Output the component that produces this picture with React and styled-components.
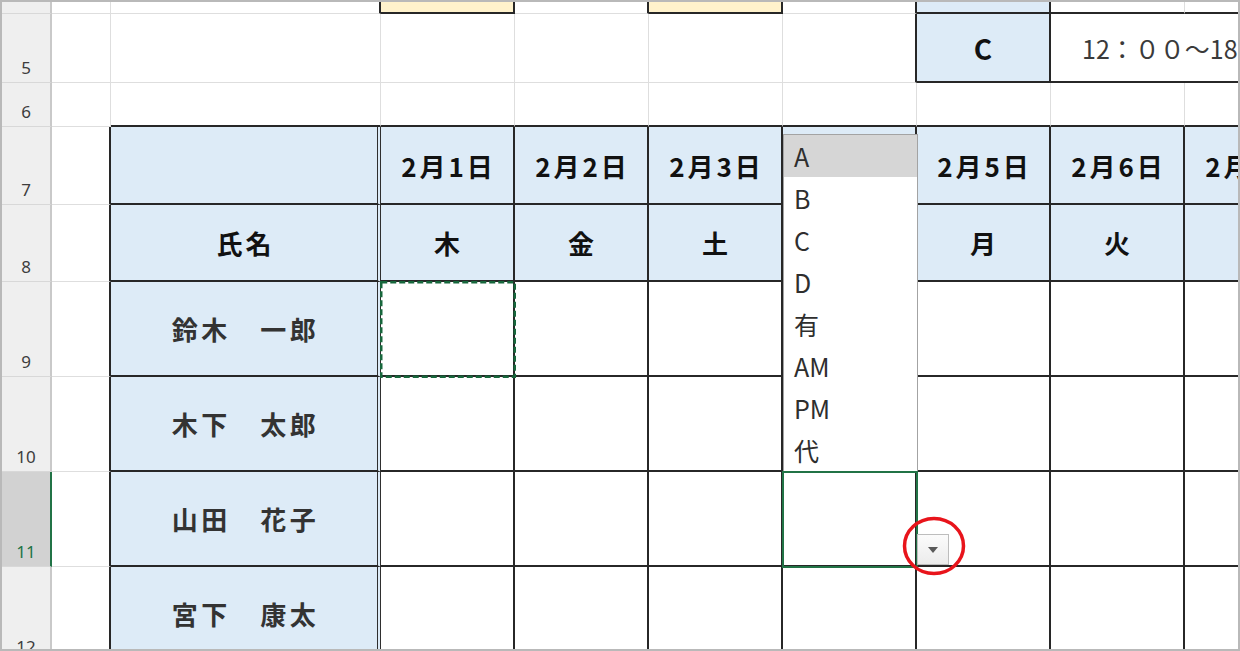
import React from 'react'
import styled, { createGlobalStyle } from 'styled-components'

const GlobalStyle = createGlobalStyle`
  html, body {
    margin: 0;
    padding: 0;
    background: #fff;
  }
  body {
    font-family: "Noto Sans CJK JP", "Noto Sans", sans-serif;
  }
`

const DARK = '2px solid #272727'
const LIGHT = '1px solid #dedede'
const DOUBLE = '4px double #2f2f2f'

const tones = {
    white: '#ffffff',
    blue: '#ddebf7',
    yellow: '#fff2cc',
}

const dates = ['2月1日', '2月2日', '2月3日', '2月4日', '2月5日', '2月6日', '2月7日']
const days = ['木', '金', '土', '日', '月', '火', '水']
const people = [
    { row: 9, name: '鈴木　一郎' },
    { row: 10, name: '木下　太郎' },
    { row: 11, name: '山田　花子' },
    { row: 12, name: '宮下　康太' },
]
const options = ['A', 'B', 'C', 'D', '有', 'AM', 'PM', '代']

function App() {
    return (
        <>
            <GlobalStyle />
            <Frame>
                <Sheet>
                    {/* row 4 (cut off at the top) */}
                    <RowHead />
                    <Cell />
                    <Cell $r={DARK} />
                    <Cell $tone="yellow" $r={DARK} $b={DARK} />
                    <Cell $r={DARK} />
                    <Cell $tone="yellow" $r={DARK} $b={DARK} />
                    <Cell $r={DARK} />
                    <Cell $tone="blue" $r={DARK} $b={DARK} />
                    <Cell $b={DARK} />
                    <Cell $b={DARK} />

                    {/* row 5 */}
                    <RowHead>5</RowHead>
                    <Cell />
                    <Cell />
                    <Cell />
                    <Cell />
                    <Cell />
                    <Cell $r={DARK} />
                    <Cell $tone="blue" $r={DARK} $b={DARK}>
                        <KeyText>C</KeyText>
                    </Cell>
                    <Cell $span={2} $b={DARK} $align="start" $clip>
                        <TimeText>12：００～18：００</TimeText>
                    </Cell>

                    {/* row 6 */}
                    <RowHead>6</RowHead>
                    <Cell />
                    {Array.from({ length: 8 }).map((_, i) => (
                        <Cell key={i} $b={DARK} />
                    ))}

                    {/* row 7 */}
                    <RowHead>7</RowHead>
                    <Cell $r={DARK} />
                    <Cell $tone="blue" $r={DOUBLE} $b={DARK} />
                    {dates.map(d => (
                        <Cell key={d} $tone="blue" $r={DARK} $b={DARK}>
                            <HeadText>{d}</HeadText>
                        </Cell>
                    ))}

                    {/* row 8 */}
                    <RowHead>8</RowHead>
                    <Cell $r={DARK} />
                    <Cell $tone="blue" $r={DOUBLE} $b={DARK}>
                        <HeadText>氏名</HeadText>
                    </Cell>
                    {days.map(d => (
                        <Cell key={d} $tone="blue" $r={DARK} $b={DARK}>
                            <HeadText>{d}</HeadText>
                        </Cell>
                    ))}

                    {people.map(p => (
                        <React.Fragment key={p.row}>
                            <RowHead $active={p.row === 11}>{p.row}</RowHead>
                            <Cell $r={DARK} />
                            <Cell $tone="blue" $r={DOUBLE} $b={DARK}>
                                <NameText>{p.name}</NameText>
                            </Cell>
                            {days.map((d, i) => (
                                <Cell key={d} $r={DARK} $b={DARK}>
                                    {p.row === 9 && i === 0 && (
                                        <Marquee width="136" height="97">
                                            <rect x="1.25" y="1.25" width="133.5" height="94.5" fill="none"
                                                stroke="#17673c" strokeWidth="2.5" strokeDasharray="6 3" />
                                        </Marquee>
                                    )}
                                    {p.row === 11 && i === 3 && <ActiveCell />}
                                </Cell>
                            ))}
                        </React.Fragment>
                    ))}
                </Sheet>
            </Frame>
        </>
    )
}

function ActiveCell() {
    return (
        <>
            <Selection />
            <DropList>
                {options.map((o, i) => (
                    <DropItem key={o} $active={i === 0}>{o}</DropItem>
                ))}
            </DropList>
            <DropButton>
                <svg width="10" height="6" viewBox="0 0 10 6">
                    <path d="M0 0 L10 0 L5 6 Z" fill="#595959" />
                </svg>
            </DropButton>
            <Marker width="70" height="64" viewBox="0 0 70 64">
                <ellipse cx="35" cy="32" rx="29.5" ry="27.5" fill="none" stroke="#e8141b" strokeWidth="3.5" />
            </Marker>
        </>
    )
}

const Frame = styled.div`
    width: 1240px;
    height: 651px;
    box-sizing: border-box;
    border: 2px solid #b9b9b9;
    overflow: hidden;
    background: #fff;
`
const Sheet = styled.div`
    display: grid;
    grid-template-columns: 50px 59px 270px repeat(7, 134px);
    grid-template-rows: 12px 69px 44px 78px 77px repeat(4, 95px);
    width: max-content;
`
const RowHead = styled.div`
    box-sizing: border-box;
    display: flex;
    align-items: flex-end;
    justify-content: center;
    padding-bottom: 6px;
    background: ${p => p.$active ? '#d2d2d2' : '#efefef'};
    border-right: 2px solid ${p => p.$active ? '#217346' : '#c9c9c9'};
    border-bottom: 1px solid #d8d8d8;
    color: ${p => p.$active ? '#217346' : '#3d3d3d'};
    font-family: "Noto Sans", "DejaVu Sans", sans-serif;
    font-size: 17px;
    line-height: 1;
`
const Cell = styled.div`
    box-sizing: border-box;
    position: relative;
    min-width: 0;
    display: flex;
    align-items: center;
    justify-content: ${p => p.$align === 'start' ? 'flex-start' : 'center'};
    background: ${p => tones[p.$tone || 'white']};
    border-right: ${p => p.$r || LIGHT};
    border-bottom: ${p => p.$b || LIGHT};
    grid-column: ${p => p.$span ? `span ${p.$span}` : 'auto'};
    overflow: ${p => p.$clip ? 'hidden' : 'visible'};
    white-space: nowrap;
`
const HeadText = styled.span`
    font-size: 26px;
    font-weight: 700;
    letter-spacing: 3px;
    color: #111;
    margin-right: -3px;
`
const NameText = styled.span`
    font-size: 26px;
    font-weight: 700;
    letter-spacing: 3.5px;
    color: #333;
    margin-right: -3px;
`
const KeyText = styled.span`
    font-size: 28px;
    font-weight: 700;
    color: #111;
`
const TimeText = styled.span`
    padding-left: 31px;
    font-size: 25px;
    font-weight: 400;
    color: #3a3a3a;
`
const Marquee = styled.svg`
    position: absolute;
    left: -1px;
    top: -1px;
    z-index: 2;
`
const Selection = styled.div`
    position: absolute;
    left: -1px;
    top: -1px;
    right: -3px;
    bottom: -3px;
    border: 2px solid #217346;
    z-index: 2;
`
const DropList = styled.div`
    position: absolute;
    left: 0;
    bottom: calc(100% + 1px);
    width: 135px;
    box-sizing: border-box;
    border: 1px solid #a3a3a3;
    border-bottom: none;
    background: #fff;
    z-index: 3;
`
const DropItem = styled.div`
    height: 42px;
    line-height: 42px;
    padding-left: 10px;
    font-size: 25px;
    color: #2e2e2e;
    background: ${p => p.$active ? '#d6d6d6' : 'transparent'};
`
const DropButton = styled.div`
    position: absolute;
    left: calc(100% + 2px);
    top: 62px;
    width: 32px;
    height: 31px;
    box-sizing: border-box;
    border: 1px solid #bdbdbd;
    background: linear-gradient(#fbfbfb, #ececec);
    display: flex;
    align-items: center;
    justify-content: center;
    z-index: 3;
`
const Marker = styled.svg`
    position: absolute;
    left: 116px;
    top: 42px;
    z-index: 4;
`

export default App
